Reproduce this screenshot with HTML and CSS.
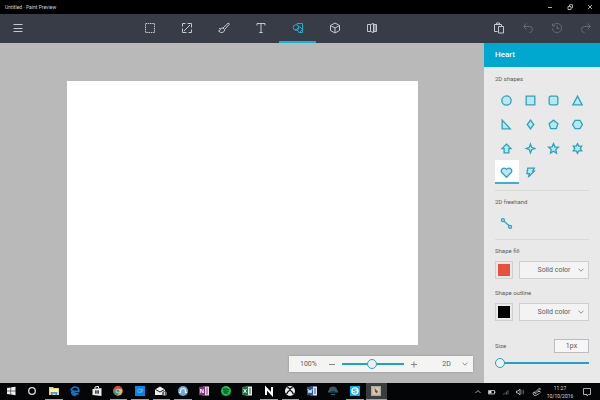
FILE: index.html
```html
<!DOCTYPE html>
<html lang="en">
<head>
<meta charset="utf-8">
<title>Untitled - Paint Preview</title>
<link rel="stylesheet" href="styles.css">
</head>
<body>
<div class="desktop">
  <header class="titlebar">
    <span class="title">Untitled · Paint Preview</span>
    <div class="window-buttons">
      <button aria-label="Minimize"><svg viewBox="0 0 8 8"><path d="M2 4.500h4"/></svg></button>
      <button aria-label="Restore"><svg viewBox="0 0 8 8"><path d="M2 3.500h3v3H2zM3.500 3V1.700h3v3H5.500"/></svg></button>
      <button aria-label="Close"><svg viewBox="0 0 8 8"><path d="M2 2l4 4M6 2L2 6"/></svg></button>
    </div>
  </header>

  <nav class="toolbar">
    <button class="menu" aria-label="Menu"><svg viewBox="0 0 12 12"><path d="M1.500 2.500h9M1.500 6.500h9M1.500 9.500h9"/></svg></button>
    <div class="tools">
      <button aria-label="Select"><svg viewBox="0 0 12 12"><rect x="1.500" y="1.500" width="9" height="9" stroke-dasharray="1.500 .75"/></svg></button>
      <button aria-label="Crop"><svg viewBox="0 0 12 12"><path d="M3 9l6-6M6.500 1.500h4v4M1.500 6.500v4h4M1.500 4.500v-3h3M10.500 7.500v3h-3"/></svg></button>
      <button aria-label="Brushes"><svg viewBox="0 0 12 12"><path d="M5 6L10 1.300q1.500-.3 1.200 1.200L6.500 7.500zM5 6q-2-.5-2.500 1.200Q2 9 .5 9q2 2.300 4.500 1.300Q7 9.300 6.500 7.500M1 6.300l2 1"/></svg></button>
      <button aria-label="Text"><svg viewBox="0 0 12 12"><path d="M2 3.500v-2h8v2M6 1.500v9M4.300 10.500h3.400"/></svg></button>
      <button class="active" aria-label="Shapes"><svg viewBox="0 0 12 12"><path d="M5 2.500V1.500h5.500v9H6.500M4.500 8.500L3 7"/><circle cx="4" cy="5.500" r="2.800"/><path d="M7.500 4.500l3 3-3 3-3-3z"/></svg></button>
      <button aria-label="3D"><svg viewBox="0 0 12 12"><path d="M6 1l4.500 2.500v5L6 11 1.500 8.500v-5zM1.500 3.500L6 6l4.500-2.500M6 6v5"/></svg></button>
      <button aria-label="View"><svg viewBox="0 0 12 12"><path d="M4.500 2.500h-3v7h3M4.500 2.500l3-1v9l-3-1zM7.500 2.500h3v7h-3M9 2.500v7"/></svg></button>
    </div>
    <div class="history">
      <button aria-label="Paste"><svg viewBox="0 0 12 12"><path d="M4.500 9.500h-3v-7h7V4M3.500 2.500V1h3v1.500M5.500 4.500h5v6.500h-5z"/></svg></button>
      <button class="dim" aria-label="Undo"><svg viewBox="0 0 12 12"><path d="M4.500 1.500l-3 3 3 3M1.500 4.500h6q3 0 3 3t-3 3"/></svg></button>
      <button class="dim" aria-label="History"><svg viewBox="0 0 12 12"><path d="M2 3.500A4.700 4.700 0 1 1 1.300 6.500M1.500 1.500v2.500H4M6 3.500v3h2.300"/></svg></button>
      <button class="dim" aria-label="Redo"><svg viewBox="0 0 12 12"><path d="M7.500 1.500l3 3-3 3M10.500 4.500h-6q-3 0-3 3t3 3"/></svg></button>
    </div>
  </nav>

  <div class="workspace">
    <main class="stage">
      <div class="paper"></div>
      <div class="zoombar">
        <label class="percent" for="zoom">100%</label>
        <button aria-label="Zoom out"><svg viewBox="0 0 8 8"><path d="M1 4.500h6"/></svg></button>
        <input id="zoom" type="range" min="0" max="100" value="49">
        <button aria-label="Zoom in"><svg viewBox="0 0 8 8"><path d="M1 4.500h6M4 1.500v6"/></svg></button>
        <div class="drop mode">
          <select aria-label="View mode"><option>2D</option></select>
          <svg viewBox="0 0 8 8"><path d="M1.500 2.700L4 5.200l2.500-2.500"/></svg>
        </div>
      </div>
    </main>

    <aside class="panel">
      <h1>Heart</h1>
      <div class="panel-body">
        <section>
          <h2>2D shapes</h2>
          <div class="shapes">
            <button aria-label="Circle"><svg viewBox="0 0 12 12"><circle cx="6" cy="6" r="4.300"/></svg></button>
            <button aria-label="Square"><svg viewBox="0 0 12 12"><path d="M2 2h8v8H2z"/></svg></button>
            <button aria-label="Rounded square"><svg viewBox="0 0 12 12"><rect x="2" y="2" width="8" height="8" rx="1.500"/></svg></button>
            <button aria-label="Triangle"><svg viewBox="0 0 12 12"><path d="M6 2l4.300 8H1.700z"/></svg></button>
            <button aria-label="Right triangle"><svg viewBox="0 0 12 12"><path d="M2 2l7.500 8H2z"/></svg></button>
            <button aria-label="Diamond"><svg viewBox="0 0 12 12"><path d="M6 2L9 6 6 10 3 6z"/></svg></button>
            <button aria-label="Pentagon"><svg viewBox="0 0 12 12"><path d="M6 2l4.100 3.200L8.600 9.800H3.400L1.900 5.200z"/></svg></button>
            <button aria-label="Hexagon"><svg viewBox="0 0 12 12"><path d="M3.700 2.200h4.600L10.500 6 8.300 9.800H3.700L1.500 6z"/></svg></button>
            <button aria-label="Arrow"><svg viewBox="0 0 12 12"><path d="M6 1.900l4.100 4.200H8.200v4H3.800v-4H1.900z"/></svg></button>
            <button aria-label="Four-point star"><svg viewBox="0 0 12 12"><path d="M6 2l1.100 2.900L10 6 7.100 7.100 6 10 4.900 7.100 2 6l2.900-1.100z"/></svg></button>
            <button aria-label="Five-point star"><svg viewBox="0 0 12 12"><path d="M6 1.500l1.300 3 3.200.3-2.400 2.200.7 3.300L6 8.600l-2.800 1.700.7-3.300L1.500 4.800l3.200-.3z"/></svg></button>
            <button aria-label="Six-point star"><svg viewBox="0 0 12 12"><path d="M6 1.500l1.200 2.300h2.700L8.600 6l1.300 2.200H7.200L6 10.500 4.800 8.200H2.100L3.400 6 2.100 3.800h2.700z"/></svg></button>
            <button class="chosen" aria-label="Heart"><svg viewBox="0 0 12 12"><path d="M6 10.500L1.900 6.300C-.2 3.800 3.300-.1 6 3.100 8.700-.1 12.200 3.800 10.100 6.300z"/></svg></button>
            <button aria-label="Lightning"><svg viewBox="0 0 12 12"><path d="M3.500 2h6L8 4.800h1.500L4 10.300 5 7H2.700z"/></svg></button>
          </div>
        </section>
        <section class="freehand">
          <h2>2D freehand</h2>
          <div class="shapes">
            <button aria-label="Line"><svg viewBox="0 0 12 12"><path d="M3.800 4l4.600 4"/><circle cx="2.700" cy="2.900" r="1.400"/><circle cx="9.300" cy="9.100" r="1.400"/></svg></button>
          </div>
        </section>
        <section class="style">
          <label for="fill">Shape fill</label>
          <div class="row">
            <button class="swatch red" aria-label="Fill color"></button>
            <div class="drop">
              <select id="fill"><option>Solid color</option></select>
              <svg viewBox="0 0 8 8"><path d="M1.500 2.700L4 5.200l2.500-2.500"/></svg>
            </div>
          </div>
          <label for="outline">Shape outline</label>
          <div class="row">
            <button class="swatch black" aria-label="Outline color"></button>
            <div class="drop">
              <select id="outline"><option>Solid color</option></select>
              <svg viewBox="0 0 8 8"><path d="M1.500 2.700L4 5.200l2.500-2.500"/></svg>
            </div>
          </div>
          <div class="size">
            <label for="size">Size</label>
            <input id="size" type="text" value="1px">
          </div>
          <input type="range" min="1" max="100" value="1" aria-label="Outline size">
        </section>
      </div>
    </aside>
  </div>

  <footer class="taskbar">
    <div class="apps">
      <button aria-label="Start"><svg viewBox="0 0 12 12"><path fill="#eee" d="M2 3l3.600-.6v3.300H2zM6.100 2.300L10.500 1.700v4H6.100zM2 6.200h3.600v3.300L2 9zM6.100 6.200h4.400v4l-4.400-.6z"/></svg></button>
      <button aria-label="Cortana"><svg viewBox="0 0 12 12"><circle cx="6" cy="6" r="3.300" fill="none" stroke="#ddd" stroke-width="1.300"/></svg></button>
      <button class="open" aria-label="File Explorer"><svg viewBox="0 0 12 12"><path fill="#e9d37a" d="M1 2h4l1 1h5v7H1z"/><path fill="#fff2b0" d="M2 4h8v3H2z"/><path fill="#3b9fd0" d="M3 7h6v3H7.500V8.500h-3V10H3z"/></svg></button>
      <button aria-label="Edge"><svg viewBox="0 0 12 12"><path d="M2 5.500Q3 2 6.300 2 10 2.300 9.800 6.300H4.300Q4.500 9.500 9.500 8.800M4.500 5.300Q2.500 6.500 3 8.500q1.500 2 4 1.500" fill="none" stroke="#087bd8" stroke-width="1.700"/></svg></button>
      <button aria-label="Store"><svg viewBox="0 0 12 12"><path fill="#eee" d="M1.500 4l9-1v8l-9-1z"/><path d="M4 4V2l3.500-.7V3.500" fill="none" stroke="#eee"/><path fill="#111" d="M4 5.500h1.700v1.300H4zM6.200 5.500H8v1.300H6.200zM4 7.300h1.700v1.300H4zM6.200 7.300H8v1.300H6.200z"/></svg></button>
      <button class="open" aria-label="Chrome"><svg viewBox="0 0 12 12"><circle cx="6" cy="6" r="4.700" fill="#e5b83d"/><path fill="#d84b3b" d="M1.700 4a4.700 4.700 0 0 1 8.800 0H6L4.300 7.300z"/><path fill="#3b9b5a" d="M1.700 4A4.700 4.700 0 0 0 5.500 10.700L7.500 7.500 4.300 7.300z"/><circle cx="6" cy="6" r="2" fill="#468bd5" stroke="#eee" stroke-width=".6"/></svg></button>
      <button class="open" aria-label="Photos"><svg viewBox="0 0 12 12"><path fill="#0a84e0" d="M1 1h10v10H1z"/><path d="M8 4.300H4.500Q3 5 4 7.300h3.500L9 4M6 6h2" fill="none" stroke="#6bc6ff" stroke-width=".8"/></svg></button>
      <button class="open" aria-label="Mail"><svg viewBox="0 0 12 12"><path fill="#eee" d="M0 4.500L5 1.500l5 3V10H0z"/><path d="M.5 4.500L5 7l4.500-2.500" fill="none" stroke="#222"/><circle cx="9.500" cy="8.500" r="2.500" fill="#666"/><path d="M9.500 7v3" stroke="#eee" stroke-width=".8"/></svg></button>
      <button class="open" aria-label="Network"><svg viewBox="0 0 12 12"><circle cx="6" cy="6" r="5" fill="#6fa8d2"/><path d="M3.500 8V6a2.500 2.500 0 0 1 5 0v2M2 7.500h2M8 7.500h2" fill="none" stroke="#e0effa" stroke-width="1.200"/></svg></button>
      <button aria-label="OneNote"><svg viewBox="0 0 12 12"><path fill="#ead9e9" d="M5 1.500h6v9H5z"/><path fill="#80397b" d="M1 2l6-1v10l-6-1z"/><path d="M2.700 8V4l2.500 4V4" fill="none" stroke="#fff" stroke-width=".9"/><path d="M9 2.500v7" stroke="#80397b"/></svg></button>
      <button aria-label="Spotify"><svg viewBox="0 0 12 12"><circle cx="6" cy="6" r="5" fill="#1dbb55"/><path d="M3 4.300q3-1 6 .4M3.300 6.200q3-.8 5.200.4M3.700 8q2.300-.5 4.200.4" fill="none" stroke="#102b19"/></svg></button>
      <button aria-label="Excel"><svg viewBox="0 0 12 12"><path fill="#deeee4" d="M5 1.500h6v9H5z"/><path fill="#217346" d="M1 2l6-1v10l-6-1z"/><path d="M2.500 4l3 4M5.500 4l-3 4" stroke="#fff" stroke-width=".9"/><path d="M8 4h2M8 6h2M8 8h2" stroke="#217346"/></svg></button>
      <button class="open" aria-label="Netflix"><svg viewBox="0 0 12 12"><path d="M3 10V3l6 6.500V2" fill="none" stroke="#fff" stroke-width="2"/></svg></button>
      <button class="open" aria-label="Xbox"><svg viewBox="0 0 12 12"><circle cx="6" cy="6" r="5" fill="#eee"/><path d="M3.300 2.500Q4.500 2.500 6 4q1.500-1.500 2.700-1.500M2.500 9.300Q3.500 6.500 6 5q2.500 1.500 3.500 4.300" fill="none" stroke="#111" stroke-width="1.300"/></svg></button>
      <button aria-label="Word"><svg viewBox="0 0 12 12"><path fill="#dce6f5" d="M5 1.500h6v9H5z"/><path fill="#2b579a" d="M1 2l6-1v10l-6-1z"/><path d="M2 4l1 4 1-3 1 3 1-4" fill="none" stroke="#fff" stroke-width=".8"/><path d="M8 4h2M8 6h2M8 8h2" stroke="#2b579a"/></svg></button>
      <button aria-label="Remote"><svg viewBox="0 0 12 12"><path fill="#45515c" d="M2 5a4 3.500 0 0 1 8 0l1 1v1.500H1V6z"/><path d="M3 5.500h6M4 9.500h4" stroke="#1b6676"/><path fill="#222d35" d="M4 6h4v2H4z"/></svg></button>
      <button class="open" aria-label="Skype"><svg viewBox="0 0 12 12"><path fill="#00aff0" d="M1 1h10v10H1z"/><circle cx="6" cy="6" r="3.700" fill="#fff"/><path d="M7.700 4.500Q4.500 3.300 4.500 5 5 6 6.500 6.200 8 7 6.500 8 5 8.300 4.300 7.300" fill="none" stroke="#00aff0" stroke-width="1.100"/></svg></button>
      <button class="open current" aria-label="Paint Preview"><svg viewBox="0 0 12 12"><path fill="#a9aea5" d="M1 1h10v10H1z"/><path fill="#d8c8b5" d="M2.500 2.500h7v7h-7z"/><path fill="#7e4a3b" d="M4.500 3l3.500 3.500-1 2-2-1.500z"/></svg></button>
    </div>
    <div class="tray">
      <button aria-label="Show hidden icons"><svg viewBox="0 0 12 12"><path d="M3.500 7L6 4.500 8.500 7"/></svg></button>
      <button aria-label="Battery"><svg viewBox="0 0 12 12"><path d="M2.500 4.500h6v3.500h-6zM9 5.500v1.500"/><path class="solid" d="M3 5h2.500v2.500H3z"/></svg></button>
      <button class="faint" aria-label="Wireless"><svg viewBox="0 0 12 12"><path d="M3.500 8.500v-1M5 8.500V6.500M6.500 8.500v-3M8 8.500v-4.500"/></svg></button>
      <button aria-label="Volume"><svg viewBox="0 0 12 12"><path d="M2.500 5h1.500l2-2v6L4 7H2.500z"/><path class="soft" d="M7.500 4.500q1 1.500 0 3M9 3.500q1.500 2.500 0 5"/></svg></button>
    </div>
    <button class="pen" aria-label="Ink workspace"><svg viewBox="0 0 12 12"><path d="M3.500 7L8.500 2l1 1L5 7.500zM4 6Q1.500 6 2 8t3 1.300Q7 8 8.500 7.500M7 5.500q3-.5 2.500 1"/></svg></button>
    <div class="clock"><span>11:27</span><span>10/10/2016</span></div>
    <button class="notes" aria-label="Notifications"><svg viewBox="0 0 12 12"><path d="M2.500 2.500h7v6h-2L6 10V8.500H2.500z"/></svg></button>
  </footer>
</div>
</body>
</html>
```
FILE: styles.css
```css
* { box-sizing: border-box; }

body {
  margin: 0;
  font-family: Roboto, "Noto Sans", sans-serif;
  font-size: 7px;
  line-height: 8px;
  color: #5c5c5c;
}

button, select, input {
  margin: 0;
  padding: 0;
  border: 0;
  border-radius: 0;
  background: none;
  color: inherit;
  font: inherit;
}

button {
  display: flex;
  align-items: center;
  justify-content: center;
}

svg {
  display: block;
  flex: none;
  width: 12px;
  height: 12px;
  fill: none;
  stroke: currentColor;
}

.desktop {
  display: flex;
  flex-direction: column;
  min-height: 100vh;
}

.titlebar {
  display: flex;
  align-items: center;
  justify-content: space-between;
  height: 14px;
  padding-left: 5px;
  background: #000;
  color: #d4d4d4;
}
.title { font-size: 5px; }
.window-buttons { display: flex; }
.window-buttons button { width: 20px; height: 14px; }
.window-buttons svg { width: 8px; height: 8px; stroke-width: .8; }

.toolbar {
  display: grid;
  grid-template-columns: 36px 1fr 116px;
  height: 29px;
  background: #383c47;
  color: #c5c8ce;
}
.toolbar button { height: 29px; padding-bottom: 2px; }
.tools {
  display: grid;
  grid-template-columns: repeat(7, 1fr);
  width: 258px;
  margin-left: 96px;
}
.toolbar .active {
  padding-bottom: 0;
  border-bottom: 2px solid #12b2d3;
  color: #12b2d3;
}
.history { display: grid; grid-template-columns: repeat(4, 1fr); }
.history .dim { color: #646975; }

.workspace { display: flex; flex: 1; }

.stage {
  display: flex;
  flex: 1;
  flex-direction: column;
  padding: 38px 11px 11px 67px;
  background: #b9b9b9;
}
.paper { flex: 1; margin-right: 55px; background: #fff; }

input[type="range"] {
  display: block;
  width: 100%;
  height: 10px;
  appearance: none;
}
input[type="range"]::-webkit-slider-runnable-track { height: 2px; background: #23a3c3; }
input[type="range"]::-webkit-slider-thumb {
  width: 10px;
  height: 10px;
  margin-top: -4px;
  border: 1px solid #23a3c3;
  border-radius: 50%;
  background: #eef0f0;
  appearance: none;
}

.zoombar {
  display: flex;
  align-items: center;
  align-self: flex-end;
  width: 184px;
  height: 16px;
  margin-top: 11px;
  background: #f4f4f2;
  box-shadow: 0 0 2px #8c8c8c;
}
.zoombar svg { width: 8px; height: 8px; stroke: #858585; }
.zoombar button { flex: none; width: 20px; height: 16px; }
.zoombar input[type="range"] { flex: none; width: 62px; }
.zoombar .percent { flex: none; width: 33px; padding-left: 11px; }
.mode select { padding-right: 4px; }

.panel { width: 116px; background: #e9e9e9; }
h1 {
  margin: 0;
  padding: 8px 11px;
  background: #00a7cf;
  color: #fff;
  font-size: 8px;
  font-weight: 500;
  line-height: 8px;
}
.panel-body { padding: 1px 11px 0; }
section { padding: 7px 0 6px; border-bottom: 1px solid #d9d9d9; }
section.freehand { padding-bottom: 4px; }
section.style { border: 0; }
h2, section label { display: block; font-size: 6px; font-weight: 400; line-height: 8px; }
h2 { margin: 0 0 5px; }

.shapes {
  display: grid;
  grid-template-columns: repeat(4, 1fr);
  grid-auto-rows: 24px;
  color: #2aa5bd;
}
.shapes svg { width: 13px; height: 13px; fill: #b9e7f1; stroke-width: 1.2; }
.shapes .chosen { padding-top: 2px; border-bottom: 2px solid #3db1ca; background: #fff; }

.row { display: flex; gap: 6px; margin: 6px 0 10px; }
.swatch { width: 18px; height: 18px; border: 1px solid #cfcfcf; }
.swatch::before { content: ""; width: 12px; height: 12px; }
.red::before { background: #e94f3d; }
.black::before { background: #000; }

.drop { position: relative; flex: 1; }
.drop svg {
  position: absolute;
  top: 50%;
  right: 4px;
  width: 8px;
  height: 8px;
  margin-top: -4px;
  stroke: #777;
  stroke-width: .8;
  pointer-events: none;
}
select {
  display: block;
  width: 100%;
  height: 18px;
  appearance: none;
  text-align-last: center;
}
.row select { border: 1px solid #cfcfcf; background: #f3f3f3; }
.zoombar select { height: 16px; }

.size {
  display: flex;
  align-items: center;
  justify-content: space-between;
  margin: 18px 0 5px;
}
.size input {
  width: 35px;
  height: 14px;
  border: 1px solid #bdbdbd;
  background: #f6f6f6;
  text-align: center;
}

.taskbar {
  display: flex;
  align-items: stretch;
  height: 17px;
  background: #040506;
  color: #d6d6d6;
}
.apps { display: grid; grid-template-columns: repeat(18, 1fr); width: 387px; }
.apps svg { stroke: none; }
.apps button { margin: 0 2px; border-bottom: 1px solid transparent; }
.apps .open { border-bottom-color: #8ba9b8; }
.apps .current { margin: 0; background: #3b3c3e; }
.tray { display: flex; margin-left: auto; }
.tray button { width: 14px; }
.tray .faint { color: #707070; }
.soft { stroke: #777; }
.solid { fill: currentColor; stroke: none; }
.taskbar > button, .tray { stroke-width: .8; }
.pen { width: 20px; }
.clock {
  display: flex;
  flex-direction: column;
  justify-content: center;
  align-items: center;
  width: 26px;
  font-size: 5px;
  line-height: 8px;
}
.notes { width: 27px; }
```
